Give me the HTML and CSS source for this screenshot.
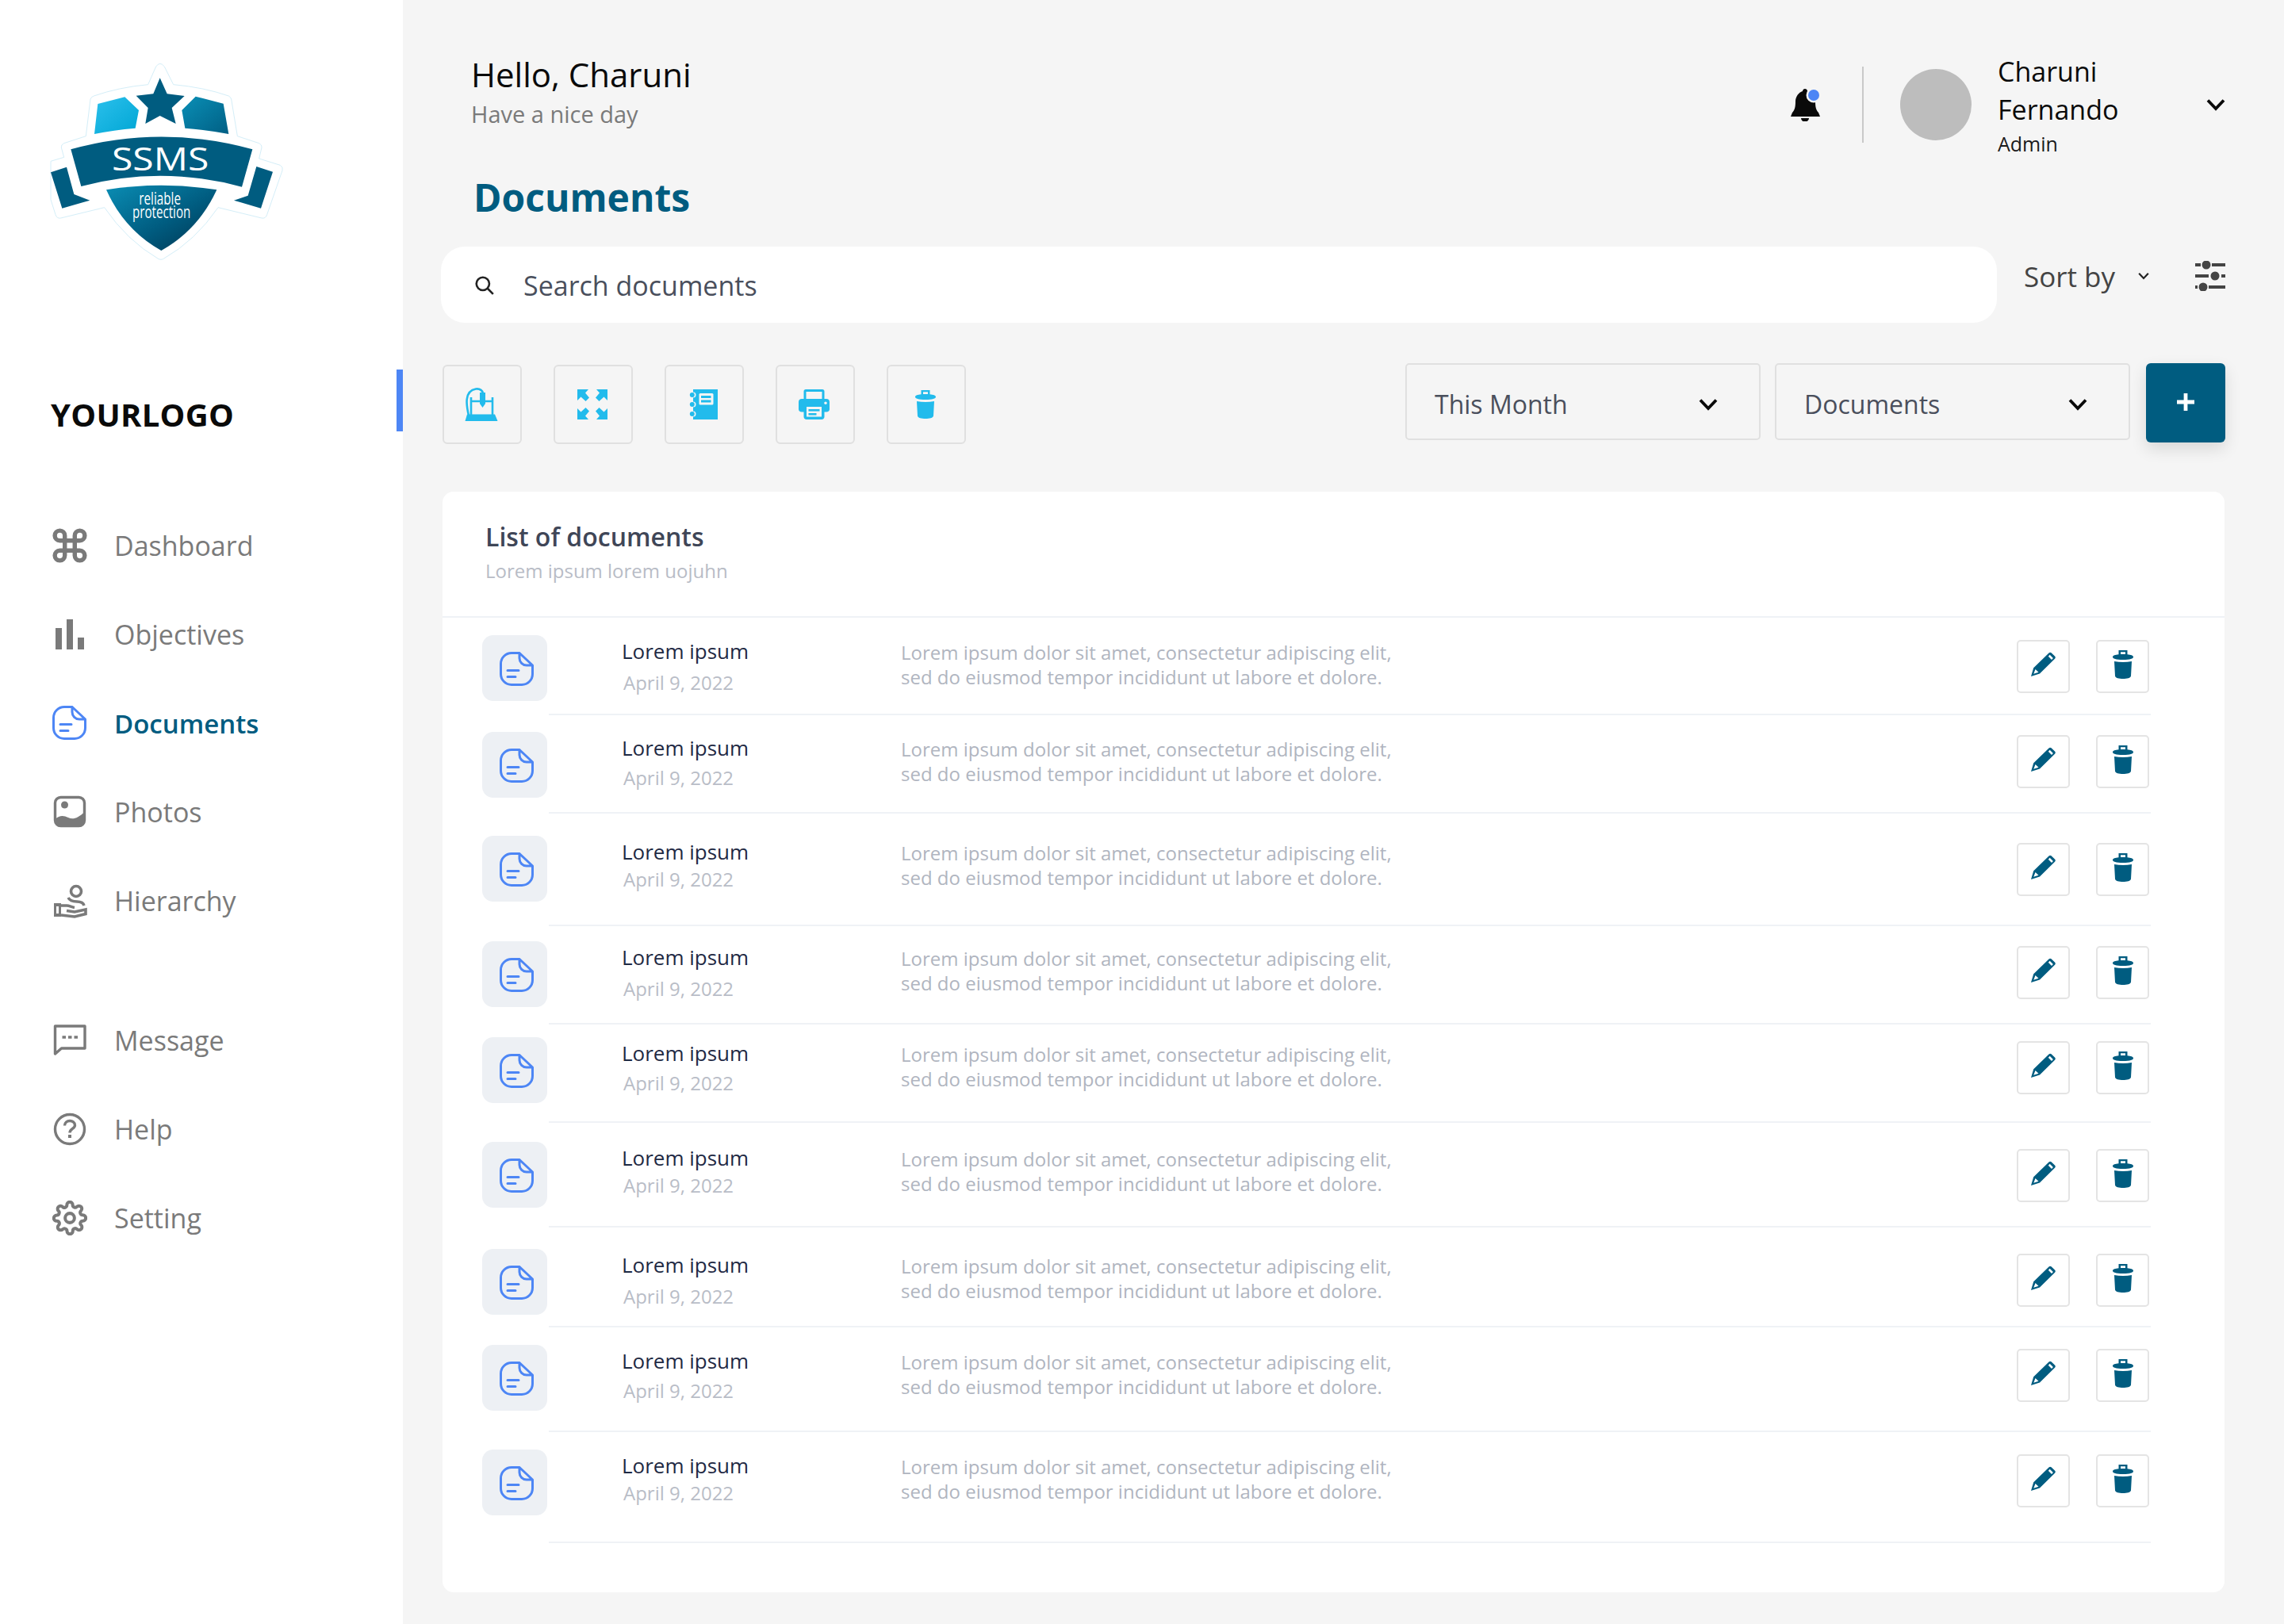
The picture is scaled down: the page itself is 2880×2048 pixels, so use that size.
FILE: index.html
```html
<!DOCTYPE html>
<html lang="en">
<head>
    <meta charset="UTF-8">
    <title>Documents</title>
    <link rel="stylesheet" href="styles.css">
</head>
<body>

<!-- shared icons -->
<svg class="sprite" aria-hidden="true">
    <symbol id="i-doc" viewBox="0 0 44 44">
        <path d="M25 1.5H15A13.5 13.5 0 0 0 1.5 15V28A13.5 13.5 0 0 0 15 41.5H28A13.5 13.5 0 0 0 41.5 28V17L25 1.5V8A9 9 0 0 0 34 17H41.5" fill="none" stroke="currentColor" stroke-width="3" stroke-linejoin="round"/>
        <path d="M10 23.5H24M10 31.5H20" fill="none" stroke="currentColor" stroke-width="3" stroke-linecap="round"/>
    </symbol>
    <symbol id="i-trash" viewBox="0 0 26 36">
        <path fill="currentColor" fill-rule="evenodd" d="M7.500 0H18.500V5.200C22.800 5.600 26 6.500 26 8.500S22 12 13 12 0 10.500 0 8.500 3.200 5.600 7.500 5.200ZM10 2.200V5H16V2.200Z"/>
        <path fill="currentColor" d="M2 14C9 15.400 17 15.400 24 14L23 32.500C22.800 35 18 36 13 36S3.200 35 3 32.500Z"/>
    </symbol>
    <symbol id="i-pencil" viewBox="0 0 31 31">
        <path fill="currentColor" fill-rule="evenodd" d="M22.500 1.500C23.500.5 24.600.5 25.600 1.300L30 5.600C31 6.600 31 7.800 30 8.800L11 27.500 0 31 3.200 20.300ZM23.700 3.800 21.800 5.700 26 10 27.900 8ZM5.500 22 3.300 27.800 9.500 25.800Z"/>
    </symbol>
    <symbol id="i-chev" viewBox="0 0 24 16">
        <path d="M2 2.500 12 13 22 2.500" fill="none" stroke="currentColor" stroke-width="3.800"/>
    </symbol>
</svg>

<div class="layout">

    <!-- Sidebar -->
    <aside class="sidebar">
        <svg class="logo" viewBox="0 0 1020 840">
            <defs>
                <linearGradient id="g-left" x1="0" y1="0" x2="1" y2="1">
                    <stop offset="0" stop-color="#2cc0ec"/>
                    <stop offset="1" stop-color="#00a6d4"/>
                </linearGradient>
                <linearGradient id="g-right" x1="0" y1="0" x2="1" y2="1">
                    <stop offset="0" stop-color="#0a8fb6"/>
                    <stop offset="1" stop-color="#005f84"/>
                </linearGradient>
                <linearGradient id="g-shield" x1="0" y1="0" x2="1" y2="1">
                    <stop offset="0" stop-color="#0a8db4"/>
                    <stop offset=".55" stop-color="#005c80"/>
                    <stop offset="1" stop-color="#00344f"/>
                </linearGradient>
            </defs>
            <path d="M470 72Q485 50 502 72L536 140Q650 150 745 183Q752 186 755 195L778 335 860 362Q872 368 870 378L860 420 940 445Q952 452 948 465L890 632Q885 648 870 645L705 605Q620 730 497 800Q490 804 480 800Q360 730 275 605L110 645Q95 648 90 632L72 575V430L122 415 112 378Q110 368 122 362L205 335 222 195Q225 186 235 183Q330 150 440 140Z" fill="#fff" stroke="#d4eef8" stroke-width="3"/>
            <path d="M250 213 352 187 405 237 392 305Q310 312 237 327Z" fill="url(#g-left)"/>
            <path d="M620 185 725 212 745 327Q660 312 580 305L568 237Z" fill="url(#g-right)"/>
            <path d="M485 115 512 175 578 183 530 228 545 288 485 258 430 288 440 228 395 182 460 175Z" fill="#005c80"/>
            <path d="M148 385Q490 290 835 385L795 527Q490 445 187 525Z" fill="#005c80"/>
            <path d="M72 472 132 452 160 555 220 578 115 608ZM850 450 912 470 867 608 765 578 818 560Z" fill="#005c80"/>
            <path d="M282 538Q490 505 700 538 630 690 490 768 350 690 282 538Z" fill="url(#g-shield)"/>
            <text class="logo-ssms" x="303" y="466" textLength="367" lengthAdjust="spacingAndGlyphs">SSMS</text>
            <text class="logo-tag"><tspan x="406" y="594" textLength="158" lengthAdjust="spacingAndGlyphs">reliable</tspan><tspan x="381" y="645" textLength="220" lengthAdjust="spacingAndGlyphs">protection</tspan></text>
        </svg>

        <div class="brand">
            <span class="brand-name">YOURLOGO</span>
            <span class="brand-bar"></span>
        </div>

        <nav class="nav">
            <a class="nav-item">
                <svg class="nav-icon" viewBox="1.500 1.500 21 21"><path d="M18 3a3 3 0 0 0-3 3v12a3 3 0 0 0 3 3 3 3 0 0 0 3-3 3 3 0 0 0-3-3H6a3 3 0 0 0-3 3 3 3 0 0 0 3 3 3 3 0 0 0 3-3V6a3 3 0 0 0-3-3 3 3 0 0 0-3 3 3 3 0 0 0 3 3h12a3 3 0 0 0 3-3 3 3 0 0 0-3-3z" fill="none" stroke="currentColor" stroke-width="2.600"/></svg>
                Dashboard
            </a>
            <a class="nav-item">
                <svg class="nav-icon" viewBox="0 0 44 44" fill="currentColor"><rect x="4" y="14" width="8" height="27"/><rect x="18" y="3" width="8" height="38"/><rect x="32" y="26" width="8" height="15"/></svg>
                Objectives
            </a>
            <a class="nav-item active">
                <svg class="nav-icon doc-blue"><use href="#i-doc"/></svg>
                Documents
            </a>
            <a class="nav-item">
                <svg class="nav-icon" viewBox="0 0 44 44">
                    <rect x="3.500" y="3.500" width="37" height="36" rx="7" fill="none" stroke="currentColor" stroke-width="3.400"/>
                    <circle cx="15.500" cy="13" r="4.500" fill="currentColor"/>
                    <path d="M3.500 31C9 26 14 26 20 29S32 30 40.500 22V33A6 6 0 0 1 34 39.500H10A6 6 0 0 1 3.500 33Z" fill="currentColor"/>
                </svg>
                Photos
            </a>
            <a class="nav-item">
                <svg class="nav-icon" viewBox="0 0 44 44" fill="none" stroke="currentColor" stroke-width="3.600">
                    <circle cx="30" cy="10" r="6.500"/>
                    <path d="M20 18C22 22 26 23 31 23 36 23 39 24 40 28"/>
                    <rect x="2" y="25" width="9" height="17" fill="currentColor" stroke="none"/>
                    <rect x="5" y="29" width="3" height="9" fill="#fff" stroke="none"/>
                    <path d="M11 28H18C21 28 25 30 28 30.500M18 34.500 28 36 42 33V38.500L28 42 11 40"/>
                </svg>
                Hierarchy
            </a>
        </nav>

        <nav class="nav nav-second">
            <a class="nav-item">
                <svg class="nav-icon" viewBox="0 0 44 44">
                    <path d="M3.500 4H41V32H11.500L3.500 39Z" fill="none" stroke="currentColor" stroke-width="3.400" stroke-linejoin="round"/>
                    <path d="M12.500 18H17M20 18H24.500M27.500 18H32" stroke="currentColor" stroke-width="3.400"/>
                </svg>
                Message
            </a>
            <a class="nav-item">
                <svg class="nav-icon" viewBox="0 0 44 44">
                    <circle cx="22" cy="22" r="18.500" fill="none" stroke="currentColor" stroke-width="3.400"/>
                    <path d="M15.500 17.500C15.500 9.500 28.500 9.500 28.500 17C28.500 21.500 22 21.500 22 26.500" fill="none" stroke="currentColor" stroke-width="3.400"/>
                    <rect x="20" y="29" width="4" height="4" fill="currentColor"/>
                </svg>
                Help
            </a>
            <a class="nav-item">
                <svg class="nav-icon" viewBox="0 0 24 24" fill="none" stroke="currentColor" stroke-width="2.200">
                    <circle cx="12" cy="12" r="3.200"/>
                    <path d="M19.400 15a1.650 1.650 0 0 0 .33 1.820l.06.06a2 2 0 0 1 0 2.830 2 2 0 0 1-2.830 0l-.06-.06a1.650 1.650 0 0 0-1.820-.33 1.650 1.650 0 0 0-1 1.510V21a2 2 0 0 1-2 2 2 2 0 0 1-2-2v-.09A1.650 1.650 0 0 0 9 19.400a1.650 1.650 0 0 0-1.820.33l-.06.06a2 2 0 0 1-2.830 0 2 2 0 0 1 0-2.830l.06-.06a1.650 1.650 0 0 0 .33-1.820 1.650 1.650 0 0 0-1.510-1H3a2 2 0 0 1-2-2 2 2 0 0 1 2-2h.09A1.650 1.650 0 0 0 4.600 9a1.650 1.650 0 0 0-.33-1.820l-.06-.06a2 2 0 0 1 0-2.830 2 2 0 0 1 2.830 0l.06.06a1.650 1.650 0 0 0 1.820.33H9a1.650 1.650 0 0 0 1-1.510V3a2 2 0 0 1 2-2 2 2 0 0 1 2 2v.09a1.650 1.650 0 0 0 1 1.510 1.650 1.650 0 0 0 1.820-.33l.06-.06a2 2 0 0 1 2.830 0 2 2 0 0 1 0 2.830l-.06.06a1.650 1.650 0 0 0-.33 1.820V9a1.650 1.650 0 0 0 1.510 1H21a2 2 0 0 1 2 2 2 2 0 0 1-2 2h-.09a1.650 1.650 0 0 0-1.510 1z"/>
                </svg>
                Setting
            </a>
        </nav>
    </aside>

    <!-- Main content -->
    <main class="main">

        <header class="topbar">
            <div class="greeting">
                <div class="hello">Hello, Charuni</div>
                <div class="nice-day">Have a nice day</div>
            </div>
            <svg class="bell" viewBox="0 0 37 42">
                <path d="M18 1C20 1 21 2.500 21 4C27 5.500 31 11 31 17C31 24 32 28 35 31L37 36H0L2 31C5 28 6 24 6 17C6 11 10 5.500 15 4C15 2.500 16 1 18 1Z" fill="#0a0a0a"/>
                <path d="M13 38H23A5 4.500 0 0 1 13 38Z" fill="#0a0a0a"/>
                <circle cx="29" cy="9" r="9.500" fill="#f5f5f5"/>
                <circle cx="29" cy="9" r="7" fill="#4d86f5"/>
            </svg>
            <span class="divider"></span>
            <span class="avatar"></span>
            <div class="user">
                <div class="user-name">Charuni Fernando</div>
                <div class="user-role">Admin</div>
            </div>
            <svg class="chev chev-dark"><use href="#i-chev"/></svg>
        </header>

        <h1 class="page-title">Documents</h1>

        <div class="search-row">
            <div class="search">
                <svg class="search-icon" viewBox="0 0 24 24" fill="none" stroke="currentColor" stroke-width="2.400"><circle cx="10" cy="10" r="7.500"/><path d="M15.500 15.500 22 22"/></svg>
                <span>Search documents</span>
            </div>
            <div class="sort">
                <span class="sort-label">Sort by</span>
                <svg class="chev-small"><use href="#i-chev"/></svg>
                <svg class="sliders" viewBox="0 0 38 38" fill="#444">
                    <path d="M0 3H7V7H0ZM21 3H38V7H21ZM0 17H17V21H0ZM33 17H38V21H33ZM0 31H3V35H0ZM17 31H38V35H17Z"/>
                    <circle cx="14" cy="5" r="5.500"/><circle cx="25" cy="19" r="5.500"/><circle cx="10" cy="33" r="5.500"/>
                </svg>
            </div>
        </div>

        <div class="toolbar">
            <button class="tool">
                <svg class="tool-icon" width="42" height="42" viewBox="0 0 42 42" fill="none" stroke="currentColor" stroke-width="2.600">
                    <path d="M8 12V34M35 12V34M8 17H35" />
                    <path d="M5 35C2 22 -1 4 14 1.500C19 1 22 3 23 7"/>
                    <path d="M19 6H26V20L22.500 25 19 20Z" fill="currentColor" stroke="none"/>
                    <path d="M3 33.500H38L41.500 42H.5Z" fill="currentColor" stroke="none"/>
                </svg>
            </button>
            <button class="tool">
                <svg class="tool-icon" width="38" height="38" viewBox="0 0 38 38" fill="currentColor">
                    <path id="arrow" d="M0 0H14L10 4.500 15 10.500 10.500 15 4.500 9.500 0 14Z"/>
                    <use href="#arrow" transform="matrix(-1 0 0 1 38 0)"/>
                    <use href="#arrow" transform="matrix(1 0 0 -1 0 38)"/>
                    <use href="#arrow" transform="matrix(-1 0 0 -1 38 38)"/>
                </svg>
            </button>
            <button class="tool">
                <svg class="tool-icon" width="36" height="38" viewBox="0 0 36 38" fill="currentColor">
                    <path d="M5 0H36V38H5V34.500A3.500 3.500 0 0 0 5 27.500V22.500A3.500 3.500 0 0 0 5 15.500V10.500A3.500 3.500 0 0 0 5 3.500Z"/>
                    <circle cx="3.800" cy="7" r="3"/><circle cx="3.800" cy="19" r="3"/><circle cx="3.800" cy="31" r="3"/>
                    <rect x="12.500" y="5" width="18" height="14.500" rx="1.500" fill="#f5f5f5"/>
                    <rect x="15" y="8" width="12.500" height="3"/><rect x="15" y="13.500" width="12.500" height="3"/>
                </svg>
            </button>
            <button class="tool">
                <svg class="tool-icon" width="39" height="38" viewBox="0 0 39 38" fill="currentColor">
                    <path fill-rule="evenodd" d="M9 0H30C31.500 0 32.500 1 32.500 2.500V12H35C37.500 12 39 13.500 39 16V25C39 27 37.500 28.500 35 28.500H32.500V34.500C32.500 36.500 31 38 29 38H10C8 38 6.500 36.500 6.500 34.500V28.500H4C1.500 28.500 0 27 0 25V16C0 13.500 1.500 12 4 12H6.500V2.500C6.500 1 7.500 0 9 0ZM9.500 3V12H29.500V3ZM10 22V34.500H29V22ZM34 15.500A1.800 1.800 0 1 0 34 19.100 1.800 1.800 0 0 0 34 15.500Z"/>
                    <rect x="12.500" y="25" width="14" height="2.600"/><rect x="12.500" y="30" width="10" height="2.600"/>
                </svg>
            </button>
            <button class="tool">
                <svg class="tool-icon" width="26" height="36"><use href="#i-trash"/></svg>
            </button>

            <div class="select first-select">
                <span>This Month</span>
                <svg class="chev chev-dark"><use href="#i-chev"/></svg>
            </div>
            <div class="select">
                <span>Documents</span>
                <svg class="chev chev-dark"><use href="#i-chev"/></svg>
            </div>
            <button class="add-btn">
                <svg width="22" height="22" viewBox="0 0 23 23"><path d="M11.500 0V23M0 11.500H23" stroke="#fff" stroke-width="5"/></svg>
            </button>
        </div>

        <section class="card">
            <div class="card-head">
                <div class="card-title">List of documents</div>
                <div class="card-sub">Lorem ipsum lorem uojuhn</div>
            </div>

            <div class="doc-list">
                <div class="doc-row">
                    <div class="doc-tile"><svg class="doc-blue"><use href="#i-doc"/></svg></div>
                    <div class="doc-body">
                        <div class="doc-text">
                            <div class="doc-name">Lorem ipsum</div>
                            <div class="doc-date">April 9, 2022</div>
                        </div>
                        <div class="doc-desc">Lorem ipsum dolor sit amet, consectetur adipiscing elit,<br>sed do eiusmod tempor incididunt ut labore et dolore.</div>
                        <div class="doc-actions">
                            <button class="act"><svg class="i-pencil"><use href="#i-pencil"/></svg></button>
                            <button class="act"><svg class="i-trash"><use href="#i-trash"/></svg></button>
                        </div>
                    </div>
                </div>
                <div class="doc-row">
                    <div class="doc-tile"><svg class="doc-blue"><use href="#i-doc"/></svg></div>
                    <div class="doc-body">
                        <div class="doc-text">
                            <div class="doc-name">Lorem ipsum</div>
                            <div class="doc-date">April 9, 2022</div>
                        </div>
                        <div class="doc-desc">Lorem ipsum dolor sit amet, consectetur adipiscing elit,<br>sed do eiusmod tempor incididunt ut labore et dolore.</div>
                        <div class="doc-actions">
                            <button class="act"><svg class="i-pencil"><use href="#i-pencil"/></svg></button>
                            <button class="act"><svg class="i-trash"><use href="#i-trash"/></svg></button>
                        </div>
                    </div>
                </div>
                <div class="doc-row">
                    <div class="doc-tile"><svg class="doc-blue"><use href="#i-doc"/></svg></div>
                    <div class="doc-body">
                        <div class="doc-text">
                            <div class="doc-name">Lorem ipsum</div>
                            <div class="doc-date">April 9, 2022</div>
                        </div>
                        <div class="doc-desc">Lorem ipsum dolor sit amet, consectetur adipiscing elit,<br>sed do eiusmod tempor incididunt ut labore et dolore.</div>
                        <div class="doc-actions">
                            <button class="act"><svg class="i-pencil"><use href="#i-pencil"/></svg></button>
                            <button class="act"><svg class="i-trash"><use href="#i-trash"/></svg></button>
                        </div>
                    </div>
                </div>
                <div class="doc-row">
                    <div class="doc-tile"><svg class="doc-blue"><use href="#i-doc"/></svg></div>
                    <div class="doc-body">
                        <div class="doc-text">
                            <div class="doc-name">Lorem ipsum</div>
                            <div class="doc-date">April 9, 2022</div>
                        </div>
                        <div class="doc-desc">Lorem ipsum dolor sit amet, consectetur adipiscing elit,<br>sed do eiusmod tempor incididunt ut labore et dolore.</div>
                        <div class="doc-actions">
                            <button class="act"><svg class="i-pencil"><use href="#i-pencil"/></svg></button>
                            <button class="act"><svg class="i-trash"><use href="#i-trash"/></svg></button>
                        </div>
                    </div>
                </div>
                <div class="doc-row">
                    <div class="doc-tile"><svg class="doc-blue"><use href="#i-doc"/></svg></div>
                    <div class="doc-body">
                        <div class="doc-text">
                            <div class="doc-name">Lorem ipsum</div>
                            <div class="doc-date">April 9, 2022</div>
                        </div>
                        <div class="doc-desc">Lorem ipsum dolor sit amet, consectetur adipiscing elit,<br>sed do eiusmod tempor incididunt ut labore et dolore.</div>
                        <div class="doc-actions">
                            <button class="act"><svg class="i-pencil"><use href="#i-pencil"/></svg></button>
                            <button class="act"><svg class="i-trash"><use href="#i-trash"/></svg></button>
                        </div>
                    </div>
                </div>
                <div class="doc-row">
                    <div class="doc-tile"><svg class="doc-blue"><use href="#i-doc"/></svg></div>
                    <div class="doc-body">
                        <div class="doc-text">
                            <div class="doc-name">Lorem ipsum</div>
                            <div class="doc-date">April 9, 2022</div>
                        </div>
                        <div class="doc-desc">Lorem ipsum dolor sit amet, consectetur adipiscing elit,<br>sed do eiusmod tempor incididunt ut labore et dolore.</div>
                        <div class="doc-actions">
                            <button class="act"><svg class="i-pencil"><use href="#i-pencil"/></svg></button>
                            <button class="act"><svg class="i-trash"><use href="#i-trash"/></svg></button>
                        </div>
                    </div>
                </div>
                <div class="doc-row">
                    <div class="doc-tile"><svg class="doc-blue"><use href="#i-doc"/></svg></div>
                    <div class="doc-body">
                        <div class="doc-text">
                            <div class="doc-name">Lorem ipsum</div>
                            <div class="doc-date">April 9, 2022</div>
                        </div>
                        <div class="doc-desc">Lorem ipsum dolor sit amet, consectetur adipiscing elit,<br>sed do eiusmod tempor incididunt ut labore et dolore.</div>
                        <div class="doc-actions">
                            <button class="act"><svg class="i-pencil"><use href="#i-pencil"/></svg></button>
                            <button class="act"><svg class="i-trash"><use href="#i-trash"/></svg></button>
                        </div>
                    </div>
                </div>
                <div class="doc-row">
                    <div class="doc-tile"><svg class="doc-blue"><use href="#i-doc"/></svg></div>
                    <div class="doc-body">
                        <div class="doc-text">
                            <div class="doc-name">Lorem ipsum</div>
                            <div class="doc-date">April 9, 2022</div>
                        </div>
                        <div class="doc-desc">Lorem ipsum dolor sit amet, consectetur adipiscing elit,<br>sed do eiusmod tempor incididunt ut labore et dolore.</div>
                        <div class="doc-actions">
                            <button class="act"><svg class="i-pencil"><use href="#i-pencil"/></svg></button>
                            <button class="act"><svg class="i-trash"><use href="#i-trash"/></svg></button>
                        </div>
                    </div>
                </div>
                <div class="doc-row">
                    <div class="doc-tile"><svg class="doc-blue"><use href="#i-doc"/></svg></div>
                    <div class="doc-body">
                        <div class="doc-text">
                            <div class="doc-name">Lorem ipsum</div>
                            <div class="doc-date">April 9, 2022</div>
                        </div>
                        <div class="doc-desc">Lorem ipsum dolor sit amet, consectetur adipiscing elit,<br>sed do eiusmod tempor incididunt ut labore et dolore.</div>
                        <div class="doc-actions">
                            <button class="act"><svg class="i-pencil"><use href="#i-pencil"/></svg></button>
                            <button class="act"><svg class="i-trash"><use href="#i-trash"/></svg></button>
                        </div>
                    </div>
                </div>
            </div>
        </section>
    </main>
</div>

</body>
</html>
```

FILE: styles.css
```css
* {
    box-sizing: border-box;
}

body {
    margin: 0;
    font-family: 'Open Sans', 'Liberation Sans', sans-serif;
    background-color: #f5f5f5;
}

.sprite {
    display: none;
}

.layout {
    display: flex;
    width: 2880px;
    height: 2048px;
    overflow: hidden;
}

/* Sidebar */
.sidebar {
    width: 508px;
    flex-shrink: 0;
    background-color: #ffffff;
    padding-top: 60px;
}

.logo {
    display: block;
    width: 340px;
    height: 280px;
    margin-left: 40px;
}

.logo-ssms {
    font-family: 'Open Sans', sans-serif;
    font-size: 122px;
    fill: #ffffff;
}

.logo-tag {
    font-family: 'Open Sans', sans-serif;
    font-size: 64px;
    fill: #ffffff;
}

.brand {
    display: flex;
    justify-content: space-between;
    align-items: center;
    height: 78px;
    margin-top: 126px;
}

.brand-name {
    margin: 35px 0 0 64px;
    font-size: 40px;
    font-weight: 700;
    letter-spacing: 0.3px;
    color: #0a0a0a;
}

.brand-bar {
    width: 8px;
    height: 100%;
    background-color: #4d86f5;
}

.nav {
    margin-top: 88px;
}

.nav-second {
    margin-top: 64px;
}

.nav-item {
    display: flex;
    align-items: center;
    gap: 34px;
    height: 112px;
    padding-left: 66px;
    font-size: 34px;
    color: #7a7a7a;
}

.nav-item.active {
    color: #005c80;
    font-size: 33px;
    font-weight: 600;
}

.nav-icon {
    width: 44px;
    height: 44px;
    flex-shrink: 0;
    color: #7a7a7a;
}

.doc-blue {
    color: #4d86f5;
}

/* Main */
.main {
    flex: 1;
    padding: 0 74px 0 48px;
}

.topbar {
    display: flex;
    align-items: center;
    height: 200px;
    padding: 64px 0 0 38px;
}

.greeting {
    align-self: flex-start;
    margin-top: 3px;
}

.hello {
    font-size: 42px;
    line-height: 54px;
    font-weight: 500;
    color: #0a0a0a;
}

.nice-day {
    margin-top: 3px;
    font-size: 29px;
    line-height: 40px;
    color: #7a7a7a;
}

.bell {
    width: 37px;
    height: 42px;
    margin-left: auto;
}

.divider {
    width: 2px;
    height: 96px;
    margin: 0 46px 0 53px;
    background-color: #c9c9c9;
}

.avatar {
    width: 90px;
    height: 90px;
    margin-right: 33px;
    border-radius: 50%;
    background-color: #bdbdbd;
}

.user {
    width: 263px;
}

.user-name {
    width: 200px;
    font-size: 34px;
    line-height: 48px;
    font-weight: 500;
    color: #0a0a0a;
}

.user-role {
    font-size: 25px;
    line-height: 34px;
    margin-top: 2px;
    color: #1a1a1a;
}

.chev {
    width: 24px;
    height: 16px;
    flex-shrink: 0;
}

.chev-dark {
    color: #0a0a0a;
}

.chev-small {
    width: 14px;
    height: 10px;
    margin-left: 29px;
    color: #222;
}

.page-title {
    margin: 19px 0 0 41px;
    font-size: 48px;
    line-height: 60px;
    font-weight: 700;
    color: #005c80;
}

.search-row {
    display: flex;
    align-items: center;
    margin-top: 32px;
}

.search {
    display: flex;
    align-items: center;
    gap: 36px;
    flex: 1;
    height: 96px;
    padding: 2px 0 0 42px;
    border-radius: 30px;
    background-color: #ffffff;
    font-size: 34px;
    color: #4a4f5c;
}

.search-icon {
    width: 26px;
    height: 26px;
    color: #222;
}

.sort {
    display: flex;
    align-items: center;
    width: 254px;
    margin: 0 0 22px 34px;
}

.sort-label {
    font-size: 35px;
    color: #444;
}

.sliders {
    width: 38px;
    height: 38px;
    margin-left: auto;
}

.toolbar {
    display: flex;
    align-items: flex-start;
    height: 100px;
    margin-top: 51px;
    padding-left: 2px;
    gap: 40px;
}

.tool {
    display: flex;
    align-items: center;
    justify-content: center;
    width: 100px;
    height: 100px;
    margin-top: 2px;
    padding: 0 3px 0 0;
    border: 2px solid #e0e0e0;
    border-radius: 6px;
    background-color: transparent;
    color: #22bbec;
}

.select {
    display: flex;
    align-items: center;
    justify-content: space-between;
    width: 448px;
    height: 97px;
    margin-left: -22px;
    padding: 6px 52px 0 35px;
    border: 2px solid #e0e0e0;
    border-radius: 5px;
    font-size: 32px;
    color: #4a4f5c;
}

.first-select {
    margin-left: auto;
}

.add-btn {
    display: flex;
    align-items: center;
    justify-content: center;
    width: 100px;
    height: 100px;
    margin-left: -20px;
    padding: 0 0 3px;
    border: none;
    border-radius: 6px;
    background-color: #005c80;
    box-shadow: 0 8px 20px rgba(0, 0, 0, 0.12);
}

/* Card */
.card {
    height: 1388px;
    margin: 62px 1px 0 2px;
    border-radius: 14px;
    background-color: #ffffff;
}

.card-head {
    height: 159px;
    padding: 35px 0 0 54px;
    border-bottom: 2px solid #eff2f6;
}

.card-title {
    font-size: 32px;
    line-height: 44px;
    font-weight: 600;
    color: #3f4657;
}

.card-sub {
    margin-top: 4px;
    font-size: 24px;
    line-height: 34px;
    color: #b8bcc6;
}

.doc-row {
    display: flex;
    align-items: flex-start;
    padding: 0 93px 0 50px;
}

/* Rows are not evenly spaced in this list */
.doc-row:nth-child(1) { --h: 123px; --t: 22px; --a: 28px; --d: 6px; }
.doc-row:nth-child(2) { --h: 124px; --t: 21px; --a: 25px; --d: 4px; }
.doc-row:nth-child(3) { --h: 142px; --t: 28px; --a: 37px; --d: 1px; }
.doc-row:nth-child(4) { --h: 124px; --t: 19px; --a: 25px; --d: 6px; }
.doc-row:nth-child(5) { --h: 124px; --t: 16px; --a: 21px; --d: 4px; }
.doc-row:nth-child(6) { --h: 132px; --t: 24px; --a: 33px; --d: 1px; }
.doc-row:nth-child(7) { --h: 126px; --t: 27px; --a: 33px; --d: 6px; }
.doc-row:nth-child(8) { --h: 132px; --t: 22px; --a: 27px; --d: 4px; }
.doc-row:nth-child(9) { --h: 140px; --t: 22px; --a: 28px; --d: 1px; }

.doc-tile {
    display: flex;
    align-items: center;
    justify-content: center;
    width: 82px;
    height: 83px;
    flex-shrink: 0;
    margin-top: var(--t);
    border-radius: 14px;
    background-color: #edf0f4;
}

.doc-tile svg {
    width: 44px;
    height: 44px;
    margin-left: 5px;
    margin-top: 2px;
}

.doc-body {
    display: flex;
    align-items: flex-start;
    flex: 1;
    height: var(--h);
    margin-left: 2px;
    padding: 0 2px 0 92px;
    border-bottom: 2px solid #eff2f6;
}

.doc-text {
    width: 352px;
    margin-top: calc(var(--t) + 2px);
}

.doc-name {
    font-size: 26px;
    line-height: 36px;
    color: #1f2a44;
}

.doc-date {
    margin: var(--d) 0 0 2px;
    font-size: 24px;
    line-height: 32px;
    color: #b9bdc7;
}

.doc-desc {
    margin-top: calc(var(--t) + 6px);
    font-size: 24px;
    line-height: 31px;
    color: #b0b5c0;
}

.doc-actions {
    display: flex;
    gap: 33px;
    margin: var(--a) 0 0 auto;
}

.act {
    display: flex;
    align-items: center;
    justify-content: center;
    width: 67px;
    height: 67px;
    padding: 0 0 6px;
    border: 2px solid #e4e4e4;
    border-radius: 5px;
    background-color: #ffffff;
    color: #005c80;
}

.i-pencil {
    width: 31px;
    height: 31px;
}

.i-trash {
    width: 26px;
    height: 36px;
}
```
